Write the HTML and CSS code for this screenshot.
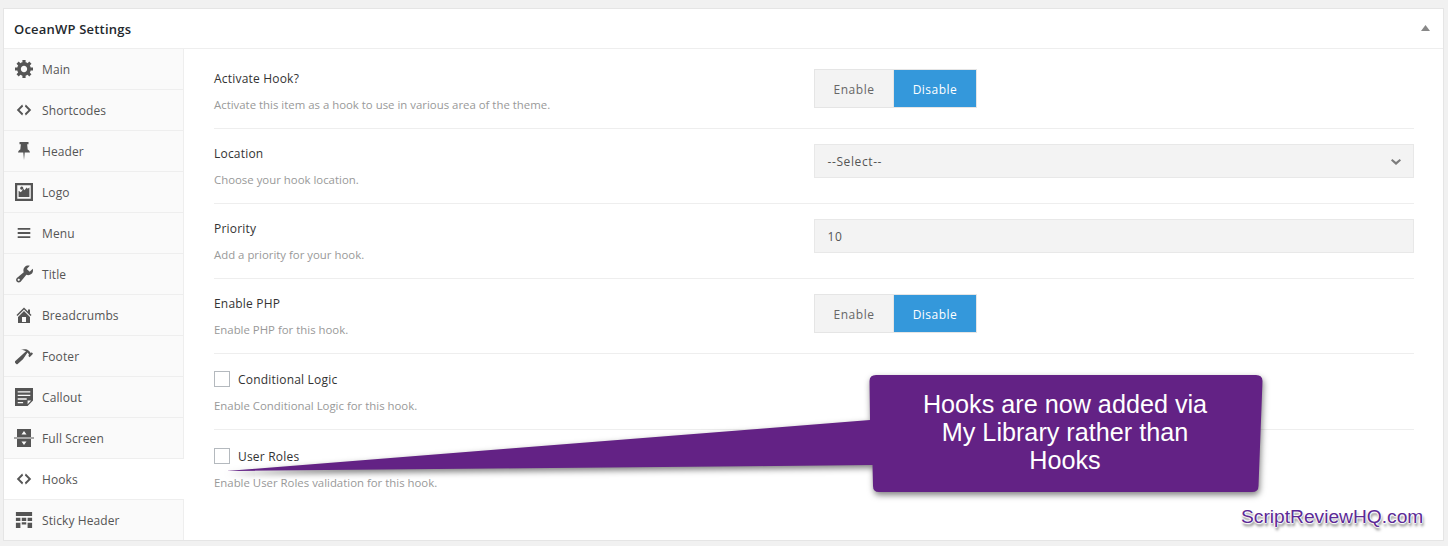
FILE: index.html
```html
<!DOCTYPE html>
<html lang="en">
<head>
<meta charset="utf-8">
<title>OceanWP Settings</title>
<link rel="stylesheet" href="styles.css">
</head>
<body>
<div class="panel">
  <header class="panel-head">
    <h2 class="panel-title">OceanWP Settings</h2>
    <svg class="collapse" viewBox="0 0 9 6"><path d="M4.500 0L9 6H0z"/></svg>
  </header>
  <div class="panel-body">
    <nav class="tabs">
      <a class="tab"><svg class="ico" viewBox="1 2 17 17"><path d="M18 12h-2.180c-.17.7-.44 1.350-.81 1.930l1.540 1.540-2.100 2.100-1.540-1.540c-.58.36-1.230.63-1.910.79V19H8v-2.180c-.68-.16-1.330-.43-1.910-.79l-1.540 1.540-2.120-2.120 1.540-1.540c-.36-.58-.63-1.230-.79-1.910H1V9.030h2.170c.16-.7.44-1.350.8-1.940L2.430 5.550l2.100-2.100 1.540 1.540c.58-.37 1.240-.64 1.930-.81V2h3v2.180c.68.16 1.330.43 1.910.79l1.540-1.540 2.120 2.120-1.540 1.540c.36.59.64 1.240.8 1.940H18V12zm-8.500 1.500c1.660 0 3-1.340 3-3s-1.340-3-3-3-3 1.340-3 3 1.340 3 3 3z"/></svg>Main</a>
      <a class="tab"><svg class="ico" viewBox="0 0 20 20"><path d="M9 6l-4 4 4 4-1 2-6-6 6-6zm2 8l4-4-4-4 1-2 6 6-6 6z"/></svg>Shortcodes</a>
      <a class="tab"><svg class="ico" viewBox="0 0 20 20"><path d="M5 0h10v2.400h-1.500l.6 6c1.500.7 2.300 1.800 2.500 3.400H10.800L10 20l-.8-8.200H3.400c.2-1.600 1-2.700 2.500-3.400l.6-6H5z"/></svg>Header</a>
      <a class="tab"><svg class="ico" viewBox="0 0 20 20"><path fill-rule="evenodd" d="M0 0h20v20H0zM2.500 2.500v15h15v-15zM4 15.500V8.500l2.500 1.800L9.500 6.500l1 1.500 2.500-3 1 1.500 2-1.500V15.500zM7.500 4a1.800 1.800 0 1 1-.01 0z"/></svg>Logo</a>
      <a class="tab"><svg class="ico" viewBox="0 0 20 20"><path d="M3 4.500h14v2H3zM3 9h14v2H3zM3 13.500h14v2H3z"/></svg>Menu</a>
      <a class="tab"><svg class="ico" viewBox="1 1.500 17 17"><path d="M16.680 9.770c-1.340 1.340-3.300 1.670-4.950.99l-5.410 6.520c-.99.99-2.590.99-3.580 0s-.99-2.590 0-3.570l6.520-5.420c-.68-1.650-.35-3.610.99-4.950 1.280-1.280 3.120-1.620 4.720-1.060l-2.890 2.890 2.820 2.820 2.860-2.870c.53 1.580.18 3.390-1.080 4.650zM3.810 16.210c.4.39 1.040.39 1.430 0 .4-.4.4-1.040 0-1.430-.39-.4-1.030-.4-1.430 0-.39.39-.39 1.030 0 1.430z"/></svg>Title</a>
      <a class="tab"><svg class="ico" viewBox="1 1 18 18"><path d="M16 8.500l1.530 1.530-1.060 1.060L10 4.620l-6.470 6.470-1.060-1.060L10 2.500l4 4v-2h2v4zm-6-2.460l6 5.990V18H4v-5.970zM12 17v-5H8v5h4z"/></svg>Breadcrumbs</a>
      <a class="tab"><svg class="ico" viewBox="1 1 18 18"><path d="M17.700 6.320l1.410 1.420-3.470 3.410-1.420-1.420.84-.82c-.32-.76-.81-1.570-1.510-2.310l-4.610 6.590-5.260 4.700c-.39.39-1.020.39-1.420 0l-1.200-1.210c-.39-.39-.39-1.020 0-1.410l10.970-9.920c-1.370-.86-3.210-1.460-5.670-1.480 2.700-.82 4.950-.93 6.580-.3 1.700.66 2.820 2.200 3.910 3.580z"/></svg>Footer</a>
      <a class="tab"><svg class="ico" viewBox="0 0 20 20"><path fill-rule="evenodd" d="M0 0h20v14L14 20H0zM3 3.500V5h14V3.500zM3 7.500V9h14V7.500zM3 11.500V13h10v-1.500zM3 15.500V17h6v-1.500zM14 14v4l4-4z"/></svg>Callout</a>
      <a class="tab"><svg class="ico ico-wide" viewBox="0 0 20 18"><path fill-rule="evenodd" d="M3 0h14v8H3zM10 2L7.500 5.500h5zM0 8.500h20v1H0zM3 10h14v8H3zM7.500 12.500l2.500 3.500 2.500-3.500z"/></svg>Full Screen</a>
      <a class="tab is-active"><svg class="ico" viewBox="0 0 20 20"><path d="M9 6l-4 4 4 4-1 2-6-6 6-6zm2 8l4-4-4-4 1-2 6 6-6 6z"/></svg>Hooks</a>
      <a class="tab"><svg class="ico" viewBox="0 0 20 20"><path d="M1 1h18v4.500H1zM1 7.500h5V11H1zM7.500 7.500h5V11h-5zM14 7.500h5V11h-5zM1 13h5v6H1zM7.500 12.500h5V15h-5zM14 13h5v6h-5z"/></svg>Sticky Header</a>
    </nav>
    <main class="fields">
      <section class="field">
        <div>
          <div class="label">Activate Hook?</div>
          <p class="desc">Activate this item as a hook to use in various area of the theme.</p>
        </div>
        <div class="toggle"><span class="toggle-btn">Enable</span><span class="toggle-btn is-on">Disable</span></div>
      </section>
      <section class="field">
        <div>
          <div class="label">Location</div>
          <p class="desc">Choose your hook location.</p>
        </div>
        <div class="input input-select">--Select--<svg class="chev" viewBox="0 0 10 6"><path d="M0 1.500L1.300 0 5 3l3.700-3L10 1.500 5 6z"/></svg></div>
      </section>
      <section class="field">
        <div>
          <div class="label">Priority</div>
          <p class="desc">Add a priority for your hook.</p>
        </div>
        <div class="input">10</div>
      </section>
      <section class="field">
        <div>
          <div class="label">Enable PHP</div>
          <p class="desc">Enable PHP for this hook.</p>
        </div>
        <div class="toggle"><span class="toggle-btn">Enable</span><span class="toggle-btn is-on">Disable</span></div>
      </section>
      <section class="field field-check">
        <div>
          <div class="check-line"><span class="checkbox"></span><span class="label">Conditional Logic</span></div>
          <p class="desc">Enable Conditional Logic for this hook.</p>
        </div>
      </section>
      <section class="field field-check field-last">
        <div>
          <div class="check-line"><span class="checkbox"></span><span class="label">User Roles</span></div>
          <p class="desc">Enable User Roles validation for this hook.</p>
        </div>
      </section>
    </main>
  </div>
</div>
<svg class="callout-shape" viewBox="0 0 1448 546"><path d="M226 471L870 420 869.500 381Q869.500 375 876 375H1256Q1262.500 375 1262.500 381L1258.500 486Q1258.500 492 1252 492H879Q873 492 873 486L872.500 465z"/></svg>
<div class="callout-text">Hooks are now added via<br>My Library rather than<br>Hooks</div>
<div class="watermark">ScriptReviewHQ.com</div>
</body>
</html>
```
FILE: styles.css
```css
* { box-sizing: border-box; }
html, body { height: 100%; }
body {
  margin: 0;
  padding: 8px 4px 5px 3px;
  background: #f1f1f1;
  font-family: "Open Sans", "Liberation Sans", sans-serif;
  font-size: 12px;
  line-height: 18px;
  color: #32373c;
  overflow: hidden;
}
.panel {
  height: 533px;
  background: #fff;
  border: 1px solid #e5e5e5;
  overflow: hidden;
}
.panel-head {
  height: 40px;
  display: flex;
  align-items: center;
  justify-content: space-between;
  padding: 0 13px 0 10px;
  border-bottom: 1px solid #eee;
}
.panel-title {
  margin: 0;
  font-size: 13px;
  font-weight: 600;
  letter-spacing: .2px;
  color: #23282d;
}
.collapse { width: 9px; height: 6px; margin-top: -1px; fill: #888; }
.panel-body { display: flex; height: 492px; }
.tabs {
  width: 180px;
  flex: none;
  background: #fafafa;
  border-right: 1px solid #eee;
  display: flex;
  flex-direction: column;
}
.tab {
  height: 41px;
  flex: none;
  display: flex;
  align-items: center;
  gap: 9px;
  padding: 1px 0 0 11px;
  border-bottom: 1px solid #eee;
  color: #555;
  letter-spacing: .1px;
  white-space: nowrap;
}
.tab.is-active {
  background: #fff;
  margin-right: -1px;
}
.tab:last-child { border-bottom: 0; }
.ico { width: 18px; height: 18px; flex: none; fill: #555; margin-top: -2px; }
.ico-wide { width: 20px; margin: -2px -1px 0 -1px; }
.fields { flex: 1; min-width: 0; padding: 5px 29px 0 30px; }
.field {
  height: 75px;
  padding-top: 15px;
  display: grid;
  grid-template-columns: 1fr 600px;
  border-bottom: 1px solid #eee;
}
.field-check { height: 76px; padding-top: 15px; }
.field-last { padding-top: 16px; border-bottom: 0; }
.label { padding-top: 1px; color: #333; letter-spacing: .2px; }
.desc { margin: 8px 0 0; color: #999; font-size: 11.4px; }
.check-line .label { padding-top: 2px; }
.toggle { display: flex; align-items: flex-start; }
.toggle-btn {
  width: 80px;
  height: 39px;
  display: flex;
  align-items: center;
  justify-content: center;
  padding-top: 2px;
  background: #f3f3f3;
  border: 1px solid #e5e5e5;
  color: #666;
  letter-spacing: .5px;
}
.toggle-btn.is-on {
  width: 83px;
  border-left: 0;
  background: #3498db;
  color: #fff;
}
.input {
  height: 34px;
  display: flex;
  align-items: center;
  justify-content: space-between;
  padding: 1px 12px 0 12.500px;
  background: #f3f3f3;
  border: 1px solid #e8e8e8;
  color: #555;
  letter-spacing: .6px;
}
.chev { width: 10px; height: 6px; fill: #7c7c7c; }
.check-line { display: flex; align-items: center; gap: 8px; }
.checkbox {
  width: 16px;
  height: 16px;
  background: #fff;
  border: 1px solid #b4b9be;
}
.callout-shape {
  position: absolute;
  left: 0;
  top: 0;
  width: 1448px;
  height: 546px;
  fill: #632285;
  filter: drop-shadow(1px 3px 3px rgba(0, 0, 0, .5));
}
.callout-text {
  position: absolute;
  left: 870px;
  top: 390px;
  width: 390px;
  text-align: center;
  font-family: "Liberation Sans", Arial, sans-serif;
  font-size: 25.2px;
  line-height: 28px;
  color: #fff;
}
.watermark {
  position: absolute;
  left: 1241px;
  top: 506px;
  font-family: "Liberation Sans", Arial, sans-serif;
  font-size: 19.200px;
  line-height: 22px;
  color: #5c2a96;
  text-shadow: -1px 0 1px #fff, 1px 0 1px #fff, 0 -1px 1px #fff, 0 1px 1px #fff, 1px 3px 3px rgba(0, 0, 0, .65);
}
```
